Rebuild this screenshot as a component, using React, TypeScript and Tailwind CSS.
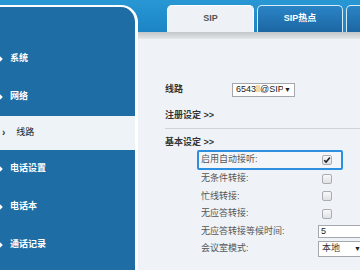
import React from "react";

const FONT = "font-['Liberation_Sans','Noto_Sans_CJK_SC',sans-serif]";

const menu = [
  { label: "系统" },
  { label: "网络" },
  { label: "线路", active: true },
  { label: "电话设置" },
  { label: "电话本" },
  { label: "通话记录" },
];

function Checkbox({ checked }: { checked?: boolean }) {
  return (
    <span className="ml-[4px] flex h-[10px] w-[10px] items-center justify-center rounded-[2px] border border-[#a9adb2] bg-[linear-gradient(to_bottom,#f7f8f9,#dfe2e5)]">
      {checked && (
        <svg width="8" height="8" viewBox="0 0 8 8">
          <path d="M1.2 4.2 L3.1 6.1 L6.9 1.6" fill="none" stroke="#222" strokeWidth="1.6" />
        </svg>
      )}
    </span>
  );
}

export default function App() {
  return (
    <div
      className={`flex h-[270px] w-[360px] overflow-hidden bg-[linear-gradient(to_bottom,#2898d5,#1b84c5_32px,#eef2f6_32px)] ${FONT}`}
    >
      {/* sidebar */}
      <div className="mt-[5px] -ml-[4px] h-[280px] w-[142px] shrink-0 rounded-tr-[17px] border-[2px] border-r-[3px] border-white bg-[#1f6da5] pt-[33px]">
        {menu.map((m) =>
          m.active ? (
            <div key={m.label} className="flex h-[34px] items-center bg-[#eef3f7]">
              <span className="ml-[4px] text-[10px] font-bold leading-none text-[#333]">›</span>
              <span className="ml-[11px] text-[9px] text-[#222]">{m.label}</span>
            </div>
          ) : (
            <div key={m.label} className="flex h-[38px] items-center">
              <span className="h-[4px] w-[4px] rotate-45 bg-white" />
              <span className="ml-[8px] text-[9px] font-bold text-white">{m.label}</span>
            </div>
          ),
        )}
      </div>

      {/* main */}
      <div className="flex min-w-0 flex-1 flex-col">
        <div className="flex h-[32px] shrink-0 items-end gap-[3px] pl-[29px]">
          <div className="flex h-[27px] w-[87px] shrink-0 items-center justify-center rounded-t-[5px] border border-b-0 border-white bg-[#eef2f6] text-[9px] font-bold text-[#555]">
            SIP
          </div>
          <div className="flex h-[27px] w-[86px] shrink-0 items-center justify-center rounded-t-[5px] border border-b-0 border-[#d8ecf8] bg-[linear-gradient(to_bottom,#2a84c6,#1c66a3)] text-[9px] font-bold text-white">
            SIP热点
          </div>
          <div className="h-[27px] w-[60px] shrink-0 rounded-t-[5px] border border-b-0 border-[#d8ecf8] bg-[linear-gradient(to_bottom,#2a84c6,#1c66a3)]" />
        </div>
        <div className="h-[7px] shrink-0 bg-[linear-gradient(to_bottom,#c3c6c9,#e4e7ea)]" />

        <div className="flex flex-1 flex-col bg-[#eff3f7] pl-[27px] pt-[44px] text-[9px]">
          <div className="flex h-[14px] items-center">
            <span className="w-[67px] font-bold text-[#333]">线路</span>
            <div className="flex h-[14px] w-[63px] items-center border border-[#a4a8ad] bg-white pl-[3px] pr-[3px]">
              <span className="w-[47px] overflow-hidden whitespace-nowrap text-[9px] text-[#222]">
                6543<span className="text-[#c9a27a]">ll</span>@SIP
              </span>
              <span className="ml-auto text-[7px] text-[#222]">▼</span>
            </div>
          </div>

          <div className="mt-[12px] font-bold text-[#333]">注册设定 &gt;&gt;</div>
          <div className="mt-[5px] h-px bg-[#cfd3d7]" />
          <div className="mt-[7px] font-bold text-[#333]">基本设定 &gt;&gt;</div>

          <div className="ml-[32px] mt-[1px] flex flex-col text-[#555]">
            <div className="flex h-[20px] w-[146px] items-center rounded-[2px] border-2 border-[#2e8fe0] bg-[#f3f6f9]">
              <span className="w-[119px] pl-[2px]">启用自动接听:</span>
              <Checkbox checked />
            </div>
            {["无条件转接:", "忙线转接:", "无应答转接:"].map((l) => (
              <div key={l} className="flex h-[17.5px] items-center border-x-2 border-transparent">
                <span className="w-[119px] pl-[2px]">{l}</span>
                <Checkbox />
              </div>
            ))}
            <div className="flex h-[17.5px] items-center border-x-2 border-transparent">
              <span className="w-[119px] shrink-0 pl-[2px]">无应答转接等候时间:</span>
              <div className="flex h-[13px] w-[60px] shrink-0 items-center border border-[#a4a8ad] bg-white pl-[2px] text-[#222]">5</div>
            </div>
            <div className="flex h-[17.5px] items-center border-x-2 border-transparent">
              <span className="w-[119px] shrink-0 pl-[2px]">会议室模式:</span>
              <div className="flex h-[16px] w-[60px] shrink-0 items-center border border-[#a4a8ad] bg-white pl-[3px] text-[#333]">
                本地
                <span className="ml-[14px] text-[7px] text-[#222]">▼</span>
              </div>
            </div>
          </div>
        </div>
      </div>
    </div>
  );
}
